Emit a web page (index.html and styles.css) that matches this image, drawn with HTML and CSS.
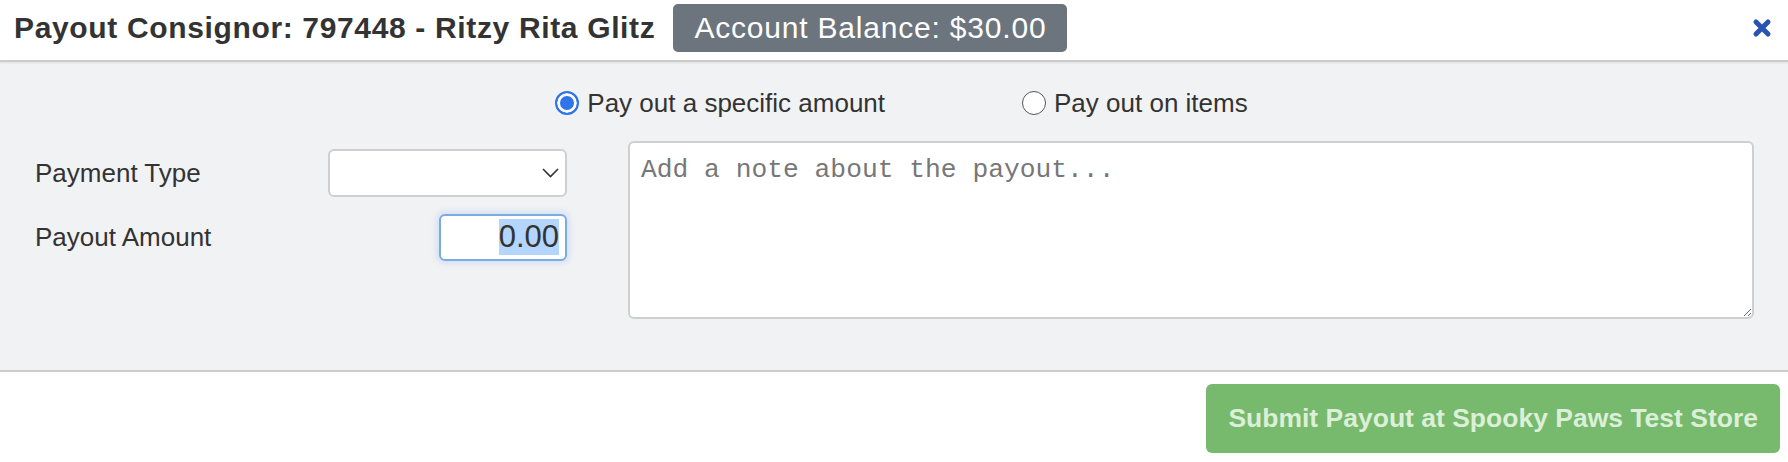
FILE: index.html
```html
<!DOCTYPE html>
<html lang="en">
<head>
    <meta charset="utf-8">
    <title>Payout Consignor</title>
    <link rel="stylesheet" href="styles.css">
</head>
<body>
    <div class="modal">
        <div class="modal-header">
            <h4 class="modal-title">Payout Consignor: 797448 - Ritzy Rita Glitz</h4>
            <span class="balance">Account Balance: $30.00</span>
            <button class="close-btn" aria-label="Close">
                <svg width="20" height="20" viewBox="0 0 20 20">
                    <path d="M4 4 L16 16 M16 4 L4 16" stroke="#2a54b4" stroke-width="5" stroke-linecap="round"/>
                </svg>
            </button>
        </div>

        <div class="modal-body">
            <div class="payout-mode">
                <label class="radio"><input type="radio" name="mode" checked> Pay out a specific amount</label>
                <label class="radio"><input type="radio" name="mode"> Pay out on items</label>
            </div>

            <div class="payout-form">
                <div class="fields">
                    <div class="field">
                        <label>Payment Type</label>
                        <div class="select-wrap">
                            <select class="pay-type"><option></option></select>
                            <svg class="chevron" width="17" height="10" viewBox="0 0 17 10">
                                <path d="M1 1 L8.5 8.5 L16 1" fill="none" stroke="#333" stroke-width="1.6"/>
                            </svg>
                        </div>
                    </div>
                    <div class="field">
                        <label>Payout Amount</label>
                        <input class="amount" id="amount" value="0.00">
                    </div>
                </div>
                <textarea class="note" placeholder="Add a note about the payout..."></textarea>
            </div>
        </div>

        <div class="modal-footer">
            <button class="submit-btn" disabled>Submit Payout at Spooky Paws Test Store</button>
        </div>
    </div>
    <script>
        var amt = document.getElementById("amount");
        amt.focus();
        amt.select();
    </script>
</body>
</html>
```

FILE: styles.css
```css
body {
    margin: 0;
    font-family: "Liberation Sans", Arial, sans-serif;
    color: #333;
    background: #fff;
}

.modal {
    width: 1788px;
    height: 462px;
    display: flex;
    flex-direction: column;
}

/* header */
.modal-header {
    display: flex;
    align-items: center;
    height: 56px;
    padding: 0 16px 4px 14px;
    border-bottom: 2px solid #cbcbcb;
    box-shadow: 0 1px 2px rgba(0, 0, 0, 0.08);
    position: relative;
    z-index: 1;
}
.modal-title {
    margin: 0;
    font-size: 30px;
    font-weight: bold;
    letter-spacing: 0.65px;
    color: #333;
}
.balance {
    margin-left: 18px;
    height: 48px;
    padding: 0 21px;
    display: flex;
    align-items: center;
    background: #6c757d;
    color: #fff;
    font-size: 30px;
    letter-spacing: 0.8px;
    border-radius: 5px;
}
.close-btn {
    margin-left: auto;
    border: none;
    background: none;
    padding: 0;
    width: 20px;
    height: 20px;
    cursor: pointer;
}

/* body */
.modal-body {
    background: #f1f2f4;
    height: 308px;
    padding: 0 34px 0 35px;
}
.payout-mode {
    display: flex;
    justify-content: center;
    gap: 137px;
    padding: 18px 0 0 14px;
    height: 46px;
    align-items: center;
}
.radio {
    display: flex;
    align-items: center;
    gap: 8px;
    font-size: 26px;
    color: #333;
}
.radio input {
    appearance: none;
    margin: 0;
    width: 24px;
    height: 24px;
    border: 1.5px solid #555;
    border-radius: 50%;
    background: #fff;
}
.radio input:checked {
    border: 2px solid #2f74e8;
    background: #2f74e8;
    box-shadow: inset 0 0 0 3px #fff;
}

.payout-form {
    display: grid;
    grid-template-columns: 532px 1fr;
    gap: 61px;
    margin-top: 15px;
}
.fields {
    display: flex;
    flex-direction: column;
    gap: 16px;
    padding-top: 8px;
}
.field {
    display: flex;
    justify-content: space-between;
    align-items: center;
    height: 48px;
}
.field label {
    font-size: 26px;
    color: #333;
}
.select-wrap {
    position: relative;
}
.pay-type {
    appearance: none;
    display: block;
    width: 239px;
    height: 48px;
    border: 2px solid #cfcfcf;
    border-radius: 6px;
    background: #fff;
}
.chevron {
    position: absolute;
    right: 8px;
    top: 19px;
}
.amount {
    box-sizing: border-box;
    width: 128px;
    height: 47px;
    border: 2px solid #79abe4;
    border-radius: 6px;
    padding: 0 6px;
    text-align: right;
    font-family: "Liberation Sans", Arial, sans-serif;
    font-size: 31px;
    color: #333;
    outline: none;
    box-shadow: 0 0 6px 2px rgba(110, 165, 230, 0.25);
}
.amount::selection {
    background: #b4d5fe;
}
.note {
    box-sizing: border-box;
    width: 100%;
    height: 178px;
    border: 2px solid #cfcfcf;
    border-radius: 6px;
    padding: 12px 11px;
    font-family: "Liberation Mono", "Courier New", monospace;
    font-size: 26.3px;
    background: #fff;
}
.note::placeholder {
    color: #777;
}

/* footer */
.modal-footer {
    flex: 1;
    border-top: 2px solid #cbcbcb;
    display: flex;
    justify-content: flex-end;
    align-items: flex-start;
    padding: 12px 8px 0 0;
}
.submit-btn {
    height: 69px;
    padding: 0 22px;
    border: none;
    border-radius: 6px;
    background: #77b96d;
    color: #dcefd8;
    font-family: "Liberation Sans", Arial, sans-serif;
    font-weight: bold;
    font-size: 26.5px;
}
```
